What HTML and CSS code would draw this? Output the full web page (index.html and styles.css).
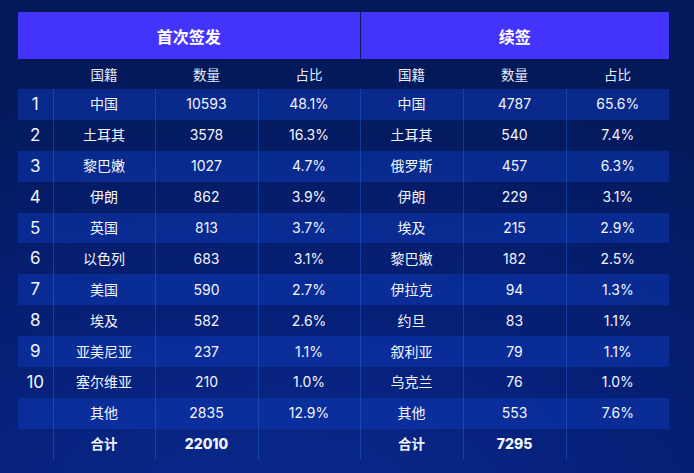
FILE: index.html
```html
<!DOCTYPE html>
<html lang="zh">
<head>
<meta charset="utf-8">
<link rel="stylesheet" href="styles.css">
</head>
<body>
<table class="visa">
  <colgroup>
    <col class="c-rank"><col class="c-a"><col class="c-b"><col class="c-c"><col class="c-b"><col class="c-b"><col class="c-b">
  </colgroup>
  <thead>
    <tr class="band">
      <th colspan="4">首次签发</th>
      <th colspan="3" class="band-r">续签</th>
    </tr>
    <tr class="heads">
      <th></th><th>国籍</th><th>数量</th><th>占比</th><th>国籍</th><th>数量</th><th>占比</th>
    </tr>
  </thead>
  <tbody>
    <tr class="odd"><td class="rank">1</td><td>中国</td><td>10593</td><td>48.1%</td><td>中国</td><td>4787</td><td>65.6%</td></tr>
    <tr><td class="rank">2</td><td>土耳其</td><td>3578</td><td>16.3%</td><td>土耳其</td><td>540</td><td>7.4%</td></tr>
    <tr class="odd"><td class="rank">3</td><td>黎巴嫩</td><td>1027</td><td>4.7%</td><td>俄罗斯</td><td>457</td><td>6.3%</td></tr>
    <tr><td class="rank">4</td><td>伊朗</td><td>862</td><td>3.9%</td><td>伊朗</td><td>229</td><td>3.1%</td></tr>
    <tr class="odd"><td class="rank">5</td><td>英国</td><td>813</td><td>3.7%</td><td>埃及</td><td>215</td><td>2.9%</td></tr>
    <tr><td class="rank">6</td><td>以色列</td><td>683</td><td>3.1%</td><td>黎巴嫩</td><td>182</td><td>2.5%</td></tr>
    <tr class="odd"><td class="rank">7</td><td>美国</td><td>590</td><td>2.7%</td><td>伊拉克</td><td>94</td><td>1.3%</td></tr>
    <tr><td class="rank">8</td><td>埃及</td><td>582</td><td>2.6%</td><td>约旦</td><td>83</td><td>1.1%</td></tr>
    <tr class="odd"><td class="rank">9</td><td>亚美尼亚</td><td>237</td><td>1.1%</td><td>叙利亚</td><td>79</td><td>1.1%</td></tr>
    <tr><td class="rank">10</td><td>塞尔维亚</td><td>210</td><td>1.0%</td><td>乌克兰</td><td>76</td><td>1.0%</td></tr>
    <tr class="odd"><td class="rank"></td><td>其他</td><td>2835</td><td>12.9%</td><td>其他</td><td>553</td><td>7.6%</td></tr>
    <tr class="total"><td class="rank"></td><td>合计</td><td>22010</td><td></td><td>合计</td><td>7295</td><td></td></tr>
  </tbody>
</table>
</body>
</html>
```

FILE: styles.css
```css
html, body {
  margin: 0;
  padding: 0;
}
body {
  width: 694px;
  height: 473px;
  overflow: hidden;
  background: radial-gradient(ellipse 120% 100% at 40% 110%, #0a2a8e 0%, #062078 45%, #031958 100%);
  font-family: "Inter", "Noto Sans CJK SC", sans-serif;
  color: #f2f5ff;
  padding-top: 12px;
  box-sizing: border-box;
}
.visa {
  margin-left: 18px;
  width: 651px;
  table-layout: fixed;
  border-collapse: collapse;
  border-spacing: 0;
}
.c-rank { width: 35px; }
.c-a { width: 102px; }
.c-b { width: 103px; }
.c-c { width: 102px; }

.band th {
  height: 47px;
  padding: 0;
  background: #4434fb;
  font-family: "Noto Sans CJK SC", sans-serif;
  font-weight: 700;
  font-size: 16px;
  color: #ffffff;
  text-align: center;
}
.band .band-r {
  border-left: 1px solid #0a1c5e;
}
.heads th {
  height: 30px;
  padding: 0;
  font-family: "Noto Sans CJK SC", sans-serif;
  font-weight: 400;
  font-size: 13.5px;
  color: #e8ecfa;
  text-align: center;
}
tbody td {
  height: 30.9px;
  padding: 0;
  text-align: center;
  font-size: 14px;
  line-height: 1;
  border-left: 1px solid rgba(40, 105, 225, 0.42);
  box-sizing: border-box;
}
tbody td.rank {
  border-left: none;
  font-size: 17px;
  font-weight: 400;
}
tbody tr.odd td {
  background: rgba(12, 54, 176, 0.55);
}
tbody tr.total td {
  font-weight: 800;
  font-size: 14px;
}
tbody tr.total td:first-child + td,
tbody tr.total td:nth-child(5) {
  font-family: "Noto Sans CJK SC", sans-serif;
  font-weight: 700;
  font-size: 13.5px;
}
```
